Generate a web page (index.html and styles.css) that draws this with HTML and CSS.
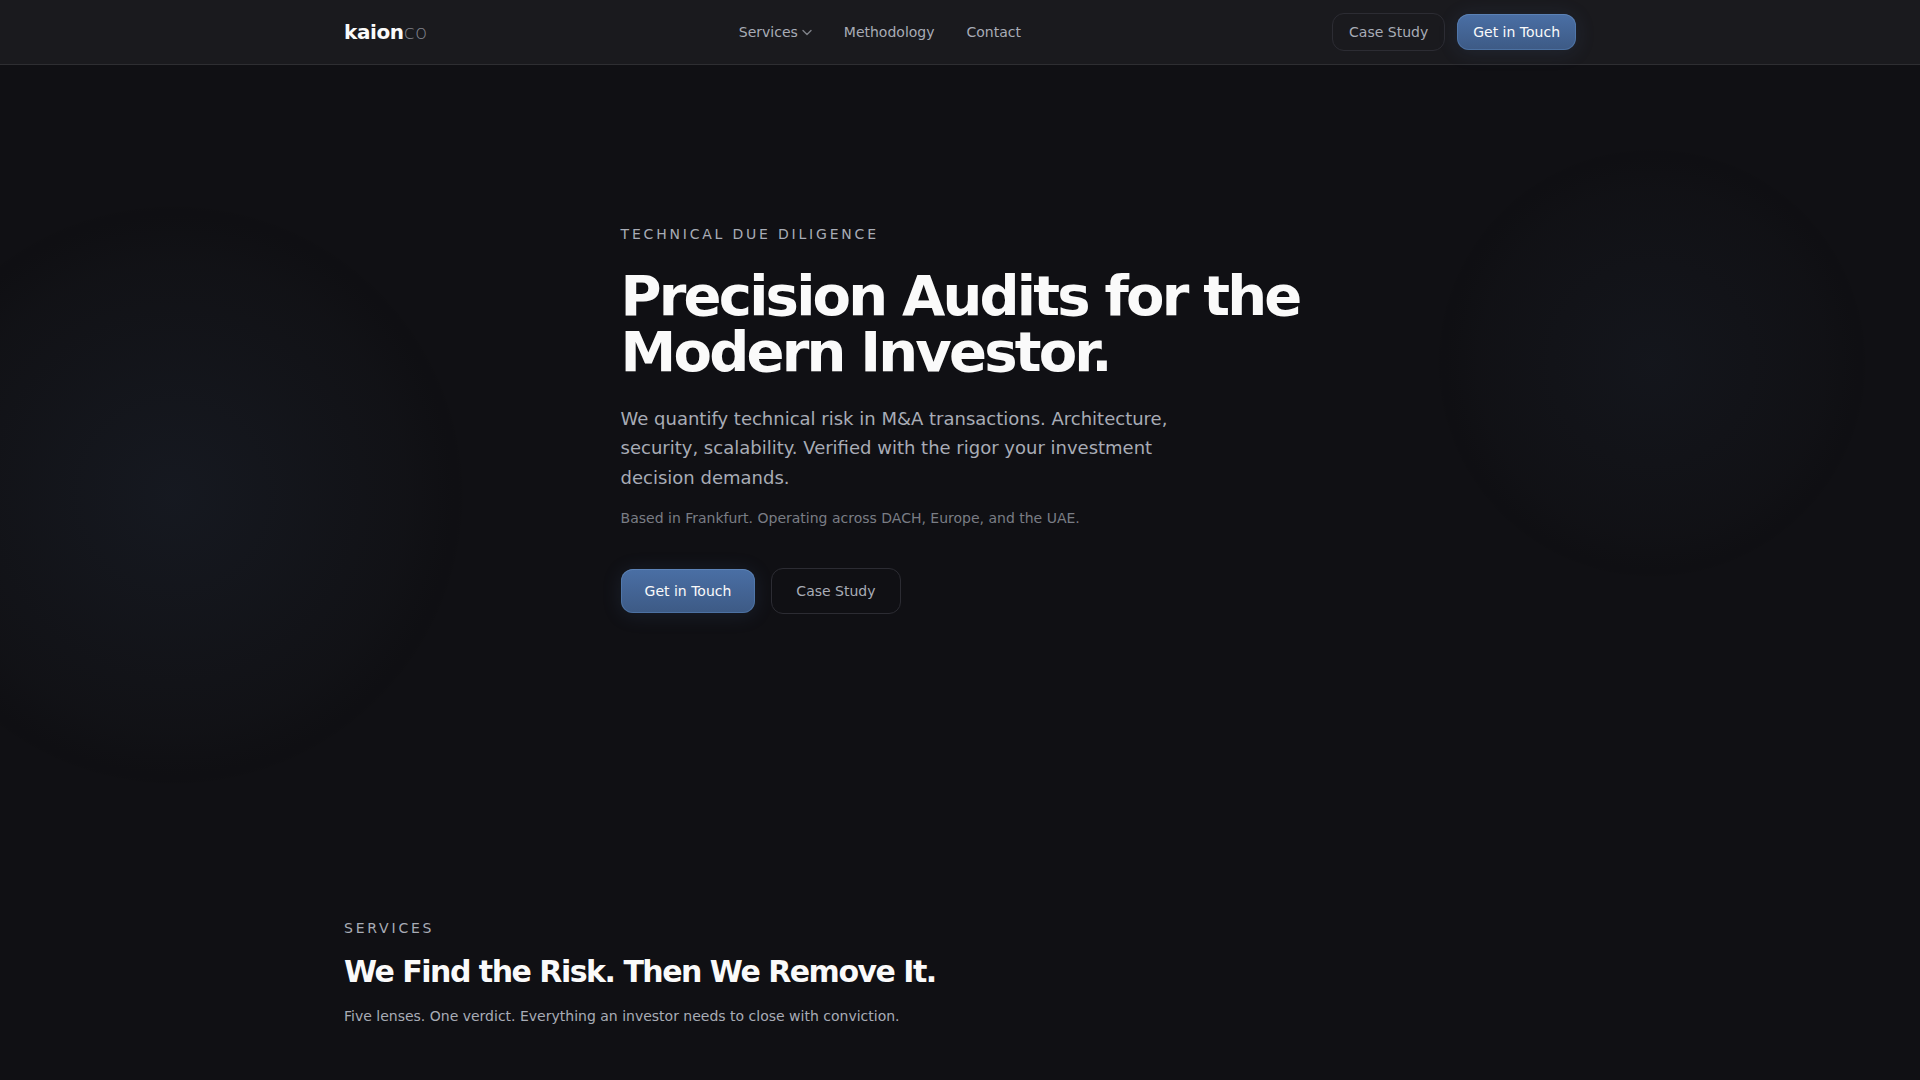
FILE: index.html
```html
<!DOCTYPE html>
<html lang="en">
<head>
    <meta charset="UTF-8">
    <meta name="viewport" content="width=device-width, initial-scale=1.0">
    <title>kaionco - Technical Due Diligence</title>
    <link rel="stylesheet" href="styles.css">
</head>
<body>
    <header class="site-header">
        <div class="container header-inner">
            <a href="#" class="logo">kaion<span>co</span></a>

            <nav class="main-nav">
                <button type="button" class="nav-link">
                    Services
                    <svg class="chevron" viewBox="0 0 10 10" fill="none" stroke="currentColor" stroke-width="1.4" stroke-linecap="round" stroke-linejoin="round" aria-hidden="true">
                        <path d="M1 3.5 L5 7.5 L9 3.5"/>
                    </svg>
                </button>
                <a href="#methodology" class="nav-link">Methodology</a>
                <a href="#contact" class="nav-link">Contact</a>
            </nav>

            <div class="header-actions">
                <a href="#case-study" class="btn btn-ghost">Case Study</a>
                <a href="#contact" class="btn btn-primary">Get in Touch</a>
            </div>
        </div>
    </header>

    <main>
        <section class="hero">
            <div class="hero-content">
                <p class="eyebrow">Technical Due Diligence</p>
                <h1>Precision Audits for the<br>Modern Investor.</h1>
                <p class="hero-text">We quantify technical risk in M&amp;A transactions. Architecture, security, scalability. Verified with the rigor your investment decision demands.</p>
                <p class="hero-note">Based in Frankfurt. Operating across DACH, Europe, and the UAE.</p>
                <div class="hero-actions">
                    <a href="#contact" class="btn btn-large btn-primary">Get in Touch</a>
                    <a href="#case-study" class="btn btn-large btn-ghost">Case Study</a>
                </div>
            </div>
        </section>

        <section class="services" id="services">
            <div class="container">
                <p class="eyebrow">Services</p>
                <h2>We Find the Risk. Then We Remove It.</h2>
                <p class="section-text">Five lenses. One verdict. Everything an investor needs to close with conviction.</p>
            </div>
        </section>
    </main>
</body>
</html>
```

FILE: styles.css
```css
* {
    box-sizing: border-box;
    margin: 0;
    padding: 0;
}

body {
    font-family: 'DejaVu Sans', sans-serif;
    font-size: 14px;
    line-height: 20px;
    background-color: #101014;
    color: #a8acb6;
}

a {
    color: inherit;
    text-decoration: none;
}

.container {
    width: 100%;
    max-width: 1280px;
    margin: 0 auto;
    padding: 0 24px;
}

/* Header */
.site-header {
    position: sticky;
    top: 0;
    z-index: 10;
    background-color: #1a1a1e;
    border-bottom: 1px solid #2e2e32;
}

.header-inner {
    display: flex;
    align-items: center;
    justify-content: space-between;
    height: 64px;
}

.logo {
    font-size: 20px;
    line-height: 28px;
    font-weight: 700;
    letter-spacing: -0.02em;
    color: #fafafa;
}

.logo span {
    font-weight: 200;
    letter-spacing: 0.02em;
    color: #80838c;
}

.main-nav {
    display: flex;
    align-items: center;
    gap: 32px;
}

.nav-link {
    display: flex;
    align-items: center;
    gap: 4px;
    font: inherit;
    color: inherit;
    background: none;
    border: none;
    cursor: pointer;
}

.nav-link:hover {
    color: #fafafa;
}

.chevron {
    width: 10px;
    height: 10px;
    opacity: 0.7;
}

.header-actions {
    display: flex;
    align-items: center;
    gap: 12px;
}

/* Buttons */
.btn {
    padding: 8px 16px;
    border-radius: 12px;
}

.btn-large {
    padding: 12px 24px;
}

.btn-ghost {
    border: 1px solid #2c2c33;
}

.btn-primary {
    color: #fafafa;
    background: linear-gradient(to bottom, #4a6fa5, #3d5a85);
    box-shadow: inset 0 0 0 1px rgba(91, 135, 190, 0.5),
                inset 0 1px 0 rgba(255, 255, 255, 0.1),
                0 2px 20px rgba(74, 111, 165, 0.16);
}

/* Hero */
.hero {
    position: relative;
    display: flex;
    justify-content: center;
    padding: 159px 24px 208px;
    overflow: hidden;
}

/* Soft glows behind the hero text */
.hero::before,
.hero::after {
    content: '';
    position: absolute;
    border-radius: 50%;
    pointer-events: none;
}

.hero::before {
    top: 138px;
    left: -118px;
    width: 584px;
    height: 584px;
    background: radial-gradient(circle closest-side, rgba(88, 126, 175, 0.08), rgba(54, 70, 80, 0.03) 80%, rgba(0, 0, 0, 0.07) 97%, transparent);
}

.hero::after {
    top: 82px;
    right: 52px;
    width: 432px;
    height: 432px;
    background: radial-gradient(circle closest-side, rgba(88, 126, 175, 0.05), rgba(54, 70, 80, 0.02) 80%, rgba(0, 0, 0, 0.07) 97%, transparent);
}

.hero-content {
    position: relative;
    z-index: 1;
}

.eyebrow {
    letter-spacing: 0.2em;
    text-transform: uppercase;
}

h1 {
    margin-top: 24px;
    font-size: 56px;
    line-height: 56px;
    font-weight: 700;
    letter-spacing: -0.05em;
    color: #fafafa;
}

.hero-text {
    max-width: 576px;
    margin-top: 24px;
    font-size: 18px;
    line-height: 1.63;
}

.hero-note {
    margin-top: 16px;
    color: #7a7d85;
}

.hero-actions {
    display: flex;
    align-items: center;
    gap: 16px;
    margin-top: 40px;
}

/* Services */
.services {
    padding: 96px 0;
}

h2 {
    margin-top: 16px;
    font-size: 30px;
    line-height: 36px;
    font-weight: 700;
    letter-spacing: -0.05em;
    color: #fafafa;
}

.section-text {
    margin-top: 16px;
}
```
